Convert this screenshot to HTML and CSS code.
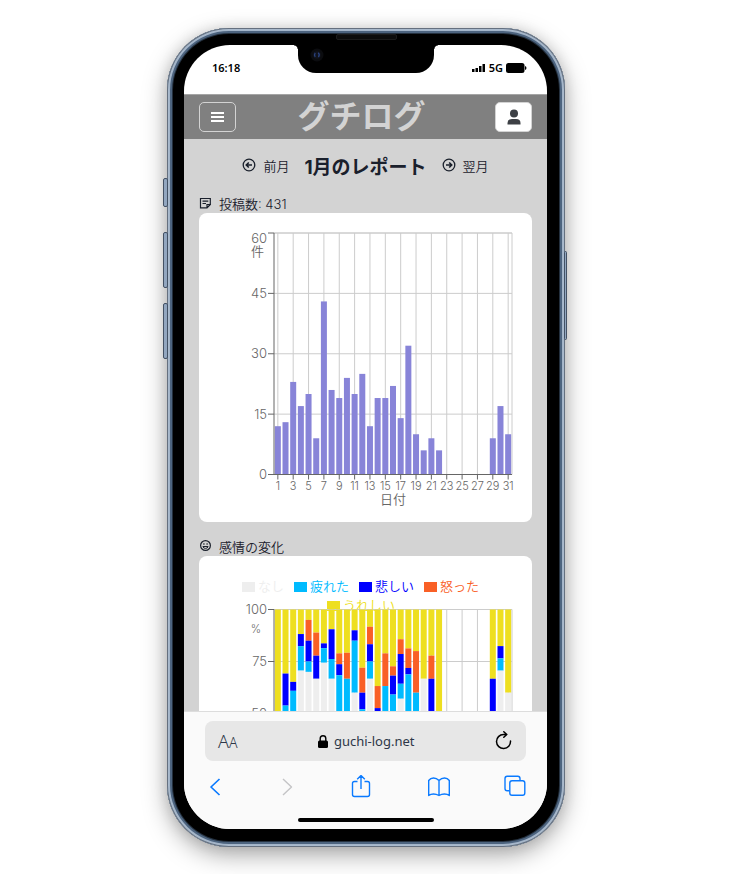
FILE: index.html
```
<!DOCTYPE html>
<html lang="ja">
<head>
<meta charset="utf-8">
<meta name="viewport" content="width=device-width, initial-scale=1">
<title>グチログ</title>
<link rel="stylesheet" href="styles.css">
</head>
<body>
<div class="phone">
  <span class="key key-mute"></span>
  <span class="key key-up"></span>
  <span class="key key-down"></span>
  <span class="key key-power"></span>
  <span class="speaker"></span>
  <div class="screen">
    <div class="notch"><svg class="camera" viewBox="0 0 14 14"><circle cx="7" cy="7" r="6.5" fill="#0b0c0f"/><circle cx="7" cy="7" r="3.8" fill="#10131c"/><path d="M5.2 4.8q-1.4 2 0 4M8.2 4.8q2 1.8.2 4.2" fill="none" stroke="#29417c" stroke-width="1.3"/></svg></div>
    <div class="status">
      <span>16:18</span>
      <div class="signals">
        <svg width="14" height="10" viewBox="0 0 14 10"><path d="M0 6h2.5v3H0zM3.500 5H6v4H3.500zM7 3h2.500v6H7zM10.500 1H13v8h-2.500z"/></svg>
        <span>5G</span>
        <svg width="21" height="10" viewBox="0 0 21 10"><rect x="0" y="0" width="18.500" height="10" rx="2.500"/><path d="M19 3q1.500.5 1.500 2T19 7z"/></svg>
      </div>
    </div>
    <header class="header">
      <button class="icon-button menu" type="button" aria-label="メニュー"><svg width="14" height="12" viewBox="0 0 14 12"><path d="M0 2h13M0 6h13M0 10h13" stroke="#fff" stroke-width="2"/></svg></button>
      <div class="logo">グチログ</div>
      <button class="icon-button user" type="button" aria-label="ユーザー"><svg width="14" height="16" viewBox="0 0 14 16"><circle cx="7" cy="4.500" r="4" fill="#3d4045"/><path d="M.5 15.500v-1.500q0-4 4.500-4h4q4.500 0 4.500 4v1.500z" fill="#3d4045"/></svg></button>
    </header>
    <main class="report">
      <nav class="months">
        <a class="month" href="#prev"><svg width="14" height="14" viewBox="0 0 14 14" fill="none" stroke="currentColor" stroke-width="1.300"><circle cx="7" cy="7" r="5.800"/><path d="M10 7H4.500M6.800 4.500 4.300 7l2.500 2.500" stroke-width="1.600"/></svg>前月</a>
        <h1>1月のレポート</h1>
        <a class="month" href="#next"><svg width="14" height="14" viewBox="0 0 14 14" fill="none" stroke="currentColor" stroke-width="1.300"><circle cx="7" cy="7" r="5.800"/><path d="M4 7h5.500M7.200 4.500 9.700 7 7.200 9.500" stroke-width="1.600"/></svg>翌月</a>
      </nav>
      <section class="section">
        <h2><svg width="12" height="12" viewBox="0 0 12 12" fill="none" stroke="currentColor" stroke-width="1.200"><path d="M11.300 7.500V1.500H1.500v9.300h6.500L11.300 7.500H8v3.300M3.500 4.200h5.800M3.500 6.500h3.500"/></svg>投稿数: 431</h2>
        <div class="card"><svg id="posts" class="chart" viewBox="0 0 333 309" role="img" aria-label="投稿数"></svg></div>
      </section>
      <section class="section">
        <h2><svg width="12" height="12" viewBox="0 0 12 12" fill="none" stroke="currentColor" stroke-width="1.200"><circle cx="6.500" cy="5.500" r="4.900"/><path d="M3.900 6.500q.4 1.900 2.600 1.900t2.600-1.900z" stroke-width="1"/><path d="M4.900 3.200v1.500M8.100 3.200v1.500"/></svg>感情の変化</h2>
        <div class="card"><svg id="moods" class="chart" viewBox="0 0 333 309" role="img" aria-label="感情の変化"></svg></div>
      </section>
    </main>
    <footer class="browser">
      <div class="address">
        <button class="plain text-size" type="button" aria-label="文字サイズ">A<small>A</small></button>
        <div class="site"><svg width="10" height="13" viewBox="0 0 10 13"><rect x="0" y="5.500" width="10" height="7.500" rx="1.500"/><path d="M2.200 6V3.500a2.800 2.800 0 0 1 5.600 0V6" fill="none" stroke="#000" stroke-width="1.400"/></svg>guchi-log.net</div>
        <button class="plain" type="button" aria-label="再読み込み"><svg width="18" height="20" viewBox="0 0 18 20" fill="none" stroke="#000" stroke-width="1.500" stroke-linecap="round" stroke-linejoin="round"><path d="M15.500 10A7 7 0 1 1 8.500 3.500h3.300M8.800.8 11.800 3.500 8.800 6.300"/></svg></button>
      </div>
      <div class="tools">
        <button class="plain" type="button" aria-label="戻る"><svg width="22" height="24" viewBox="0 0 22 24"><path d="M14.500 4 6 12l8.500 8" stroke-width="1.700"/></svg></button>
        <button class="plain off" type="button" aria-label="進む"><svg width="22" height="24" viewBox="0 0 22 24"><path d="m7 4 8.500 8L7 20"/></svg></button>
        <button class="plain" type="button" aria-label="共有"><svg width="22" height="24" viewBox="0 0 22 24"><path d="M7.500 6.500H4.500q-2 0-2 2v11q0 2 2 2h13q2 0 2-2v-11q0-2-2-2h-3M11 14V.8M7.200 4.300 11 .5 14.800 4.300"/></svg></button>
        <button class="plain" type="button" aria-label="ブックマーク"><svg width="22" height="24" viewBox="0 0 22 24"><path d="M11 5.500Q8.500 3 5.500 3T.7 5.500v15q2-1.500 4.800-1.500t5.500 1.500q2.500-1.500 5.500-1.500t4.800 1.500v-15Q19.500 3 16.500 3T11 5.500zv15"/></svg></button>
        <button class="plain" type="button" aria-label="タブ"><svg width="22" height="24" viewBox="0 0 22 24"><path d="M5.500 15.800H3.200q-2.200 0-2.200-2.200V3.500q0-2.200 2.200-2.200h10.600q2.200 0 2.200 2.200v2"/><rect x="5.800" y="5.800" width="15" height="14.500" rx="2.200"/></svg></button>
      </div>
      <div class="home"></div>
    </footer>
  </div>
</div>
<script src="app.js"></script>
</body>
</html>
```
FILE: styles.css
```
* { box-sizing: border-box; }

body {
  margin: 0;
  min-height: 100vh;
  display: flex;
  padding: 28px 20px 27px 167px;
  background: #fff;
  color: #1a202c;
  font-family: Inter, "Noto Sans CJK JP", sans-serif;
  font-size: 13px;
}

button { font: inherit; cursor: pointer; }
svg { display: block; flex: none; }

.phone {
  position: relative;
  display: flex;
  width: 100%;
  max-width: 398px;
  height: calc(100vh - 55px);
  min-height: 600px;
  padding: 17px 18px 18px 17px;
  border-radius: 62px;
  background: #000;
  box-shadow:
    inset 0 0 0 1px #65707f,
    inset 0 0 0 2px #a9bacd,
    inset 0 0 0 3px #a3b4c8,
    inset 0 0 0 5px #4d647f,
    inset 0 0 0 6px #24303e,
    0 8px 24px rgba(0, 0, 0, .34),
    0 0 14px rgba(0, 0, 0, .1);
}

.key {
  position: absolute;
  left: -4px;
  width: 5px;
  height: 56px;
  border: 1px solid #435164;
  border-radius: 2px;
  background: #92a6bf;
}
.key-mute { top: 150px; height: 29px; }
.key-up { top: 204px; }
.key-down { top: 275px; }
.key-power { top: 223px; right: -2px; left: auto; width: 3px; height: 89px; }

.speaker {
  position: absolute;
  top: 6px;
  left: 50%;
  width: 61px;
  height: 6px;
  margin-left: -30px;
  border: 1px solid #1b1b1b;
  border-radius: 2px;
  background: #0c0c0c;
}

.screen {
  position: relative;
  flex: 1;
  min-width: 0;
  display: flex;
  flex-direction: column;
  overflow: hidden;
  border-radius: 46px;
  background: #fff;
}

.notch {
  position: absolute;
  top: 0;
  left: 50%;
  width: 136px;
  height: 28px;
  margin-left: -68px;
  border-radius: 0 0 18px 18px;
  background: #000;
}
.notch::before,
.notch::after {
  content: "";
  position: absolute;
  top: 0;
  width: 4px;
  height: 4px;
}
.notch::before { right: 100%; background: radial-gradient(circle at 0 100%, transparent 3px, #000 4px); }
.notch::after { left: 100%; background: radial-gradient(circle at 100% 100%, transparent 3px, #000 4px); }
.camera { position: absolute; top: 3px; left: 12px; width: 14px; height: 14px; }

.status {
  flex: none;
  display: flex;
  justify-content: space-between;
  align-items: center;
  height: 49px;
  padding: 0 20px 4px 28px;
  color: #000;
  font-family: "Noto Sans", sans-serif;
  font-size: 11px;
  font-weight: 600;
}
.signals { display: flex; align-items: center; gap: 3px; }

.header {
  flex: none;
  display: grid;
  grid-template-columns: 37px 1fr 37px;
  align-items: center;
  height: 45px;
  padding: 0 15px;
  border-top: 1px solid #a5a5a5;
  background: #808080;
}
.logo {
  padding-right: 8px;
  color: #d3d3d3;
  font-size: 32px;
  font-weight: 700;
  line-height: 40px;
  text-align: center;
}
.icon-button {
  display: grid;
  place-items: center;
  height: 30px;
  padding: 0;
  border: 1px solid #d3d3d3;
  border-radius: 5px;
  background: #fff;
}
.menu { background: none; }

.report {
  flex: 1;
  min-height: 0;
  overflow: hidden;
  padding: 0 15px;
  background: #d3d3d3;
}
.months {
  display: flex;
  justify-content: center;
  align-items: center;
  gap: 15px;
  height: 52px;
  margin-bottom: 2px;
}
.months h1 { margin: 0; font-size: 19px; font-weight: 700; white-space: nowrap; }
.month {
  display: flex;
  align-items: center;
  gap: 7px;
  color: inherit;
  font-weight: 350;
  text-decoration: none;
  white-space: nowrap;
}
.section { margin-bottom: 14px; }
.section h2 {
  display: flex;
  align-items: center;
  gap: 8px;
  height: 20px;
  margin: 0;
  font-size: 13px;
  font-weight: 350;
}
.card { overflow: hidden; border-radius: 8px; background: #fff; }

.chart { width: 100%; height: auto; font-size: 13px; font-weight: 350; }
.chart text { fill: #666; }
.chart .small { font-size: 11px; }
.grid { fill: none; stroke: #ccc; stroke-width: 1; }
.axis { fill: none; stroke: #666; stroke-width: 1; }
.post { fill: #8884d8; }
.chart .none { fill: #eee; }
.chart .tired { fill: #0bf; }
.chart .sad { fill: #00f; }
.chart .angry { fill: #f96026; }
.chart .happy { fill: #eedf20; }

.browser {
  flex: none;
  padding: 9px 21px 7px;
  border-top: 1px solid #ddd;
  background: #fafafa;
}
.address {
  display: flex;
  justify-content: space-between;
  align-items: center;
  height: 40px;
  padding: 0 13px;
  border-radius: 8px;
  background: #e7e7e7;
}
.plain { padding: 0; border: 0; background: none; color: inherit; }
.text-size { color: #2d3748; font-family: "Noto Sans", sans-serif; font-size: 18px; font-weight: 350; }
.text-size small { font-size: 14px; }
.site {
  display: flex;
  align-items: center;
  gap: 6px;
  color: #2d3748;
  font-family: "Noto Sans", sans-serif;
  font-size: 13px;
}
.tools {
  display: grid;
  grid-template-columns: 71fr 74fr 78fr 76fr 22px;
  justify-items: start;
  align-items: center;
  height: 51px;
}
.tools svg { fill: none; stroke: #0a7aff; stroke-width: 1.4; stroke-linejoin: round; }
.tools .off svg { stroke: #c4c4c6; }
.home {
  width: 136px;
  height: 4px;
  margin: 6px auto 0;
  border-radius: 2px;
  background: #000;
}
```
FILE: app.js
```
const LEFT = 75;
const RIGHT = 313;
const DAYS = 31;
const BAND = (RIGHT - LEFT) / DAYS;
const center = (day) => LEFT + BAND * (day - 0.5);

const text = (x, y, value, cls = "", anchor = "start") =>
  `<text x="${x}" y="${y}" class="${cls}" text-anchor="${anchor}">${value}</text>`;

const bar = (day, y, height, cls) =>
  `<rect x="${center(day) - 3}" y="${y}" width="6" height="${height}" class="${cls}"/>`;

function frame(top, bottom) {
  let grid = `M${LEFT} ${top}H${RIGHT}V${bottom}`;
  let axis = `M${LEFT} ${top}V${bottom}H${RIGHT}`;
  for (let i = 0; i < 5; i++) {
    const y = top + ((bottom - top) * i) / 4;
    grid += `M${LEFT} ${y}H${RIGHT}`;
    axis += `M${LEFT - 6} ${y}H${LEFT}`;
  }
  for (let day = 1; day <= DAYS; day += 2) {
    grid += `M${center(day)} ${top}V${bottom}`;
    axis += `M${center(day)} ${bottom}v5`;
  }
  return { grid: `<path class="grid" d="${grid}"/>`, axis: `<path class="axis" d="${axis}"/>` };
}

function dayLabels(y) {
  let out = "";
  for (let day = 1; day <= DAYS; day += 2) out += text(center(day), y, day, "small", "middle");
  return out + text(194, y + 14, "日付", "", "middle");
}

const posts = [12, 13, 23, 17, 20, 9, 43, 21, 19, 24, 20, 25, 12, 19, 19, 22,
  14, 32, 10, 6, 9, 6, 0, 0, 0, 0, 0, 0, 9, 17, 10];

function drawPosts() {
  const top = 20, bottom = 261.5;
  const { grid, axis } = frame(top, bottom);
  const bars = posts.map((n, i) => {
    const height = (n / 60) * (bottom - top);
    return bar(i + 1, bottom - height, height, "post");
  }).join("");
  const labels = text(68, 30, 60, "", "end") + text(52, 43, "件")
    + text(68, 85, 45, "", "end") + text(68, 145, 30, "", "end")
    + text(68, 206, 15, "", "end") + text(68, 266, 0, "", "end");
  document.getElementById("posts").innerHTML = grid + bars + axis + labels + dayLabels(277);
}

// Lower edge, in percent, of each mood's segment from the top of the stack:
// happy, angry, sad, tired. The remainder is "none".
const moods = {
  1: [0, 0, 0, 0], 2: [69.2, 69.2, 53.8, 0], 3: [65.2, 65.2, 60.9, 0],
  4: [88.2, 88.2, 82.4, 70.6], 5: [95, 85, 75, 70], 6: [88.9, 77.8, 66.7, 66.7],
  7: [83.7, 83.7, 81.4, 74.4], 8: [90.5, 90.5, 76.2, 66.7], 9: [78.9, 73.7, 68.4, 30],
  10: [79.2, 66.7, 66.7, 30], 11: [90, 90, 85, 60], 12: [72, 60, 52, 30],
  13: [91.7, 83.3, 75, 66.7], 14: [63.2, 52.6, 40, 30], 15: [78.9, 63.2, 63.2, 30],
  16: [72.7, 68.2, 59.1, 30], 17: [85.7, 78.6, 64.3, 57.1], 18: [81.3, 71.9, 68.8, 30],
  19: [80, 60, 60, 30], 20: [66.7, 66.7, 66.7, 66.7], 21: [77.8, 66.7, 30, 30],
  22: [0, 0, 0, 0], 29: [66.7, 66.7, 30, 30], 30: [82.4, 82.4, 76.5, 70.6], 31: [60, 60, 60, 60]
};

function drawMoods() {
  const top = 53.5, bottom = 261.5;
  const { grid, axis } = frame(top, bottom);
  const y = (percent) => bottom - (percent / 100) * (bottom - top);
  let bars = "";
  for (const [day, edges] of Object.entries(moods)) {
    const stops = [100, ...edges, 0];
    ["happy", "angry", "sad", "tired", "none"].forEach((mood, i) => {
      if (stops[i] > stops[i + 1]) {
        bars += bar(Number(day), y(stops[i]), y(stops[i + 1]) - y(stops[i]), mood);
      }
    });
  }
  const legend = [
    [43, 35, "none", "なし"], [95, 35, "tired", "疲れた"], [160, 35, "sad", "悲しい"],
    [225, 35, "angry", "怒った"], [128, 54, "happy", "うれしい"]
  ].map(([x, base, cls, label]) =>
    `<rect x="${x}" y="${base - 9}" width="13" height="10" class="${cls}"/>` + text(x + 16, base, label, cls)
  ).join("");
  const labels = text(68, 58, 100, "", "end") + text(62, 77, "%", "small", "end")
    + text(68, 110, 75, "", "end") + text(68, 162, 50, "", "end");
  document.getElementById("moods").innerHTML = legend + grid + bars + axis + labels;
}

drawPosts();
drawMoods();
```
